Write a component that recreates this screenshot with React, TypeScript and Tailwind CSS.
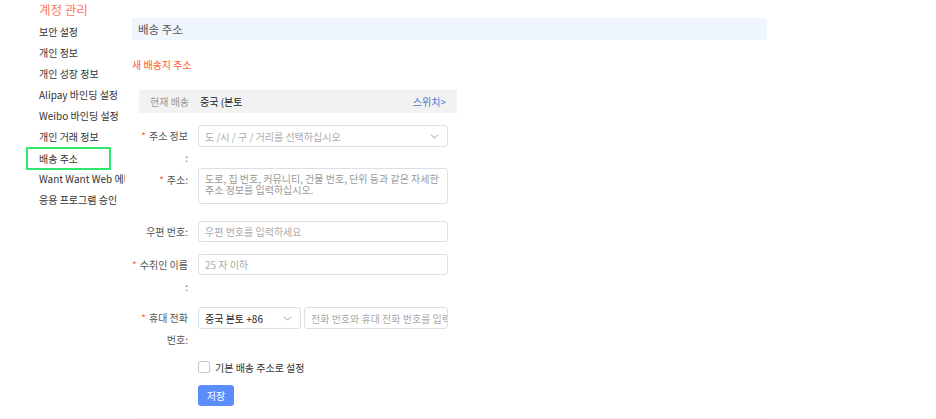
import { ChevronDown } from 'lucide-react';

const MENU = [
  '보안 설정',
  '개인 정보',
  '개인 성장 정보',
  'Alipay 바인딩 설정',
  'Weibo 바인딩 설정',
  '개인 거래 정보',
  '배송 주소',
  'Want Want Web 에디터',
  '응용 프로그램 승인',
];

const font = { fontFamily: '"Noto Sans CJK KR", "Noto Sans", "Liberation Sans", sans-serif' };

function Req() {
  return <span className="text-[#ff5a3c] mr-[3px]">*</span>;
}

export default function App() {
  return (
    <div className="flex items-start bg-white text-[#333] h-[419px] overflow-hidden" style={font}>
      {/* Sidebar */}
      <aside className="w-[125px] shrink-0 pl-[26px] overflow-hidden whitespace-nowrap mr-[7px]">
        <div className="pl-[13px] h-[21px] leading-[20px] text-[12.5px] text-[#ff7a5c]">계정 관리</div>
        {MENU.map((item) => (
          <div
            key={item}
            className={
              item === '배송 주소'
                ? 'w-[85px] h-[23px] -mb-[2px] border-2 border-[#2ee86f] pl-[11px] leading-[19px] text-[10px] text-[#333]'
                : 'h-[21px] pl-[13px] leading-[21px] text-[10px] text-[#333]'
            }
          >
            {item}
          </div>
        ))}
      </aside>

      {/* Main */}
      <main className="w-[635px] shrink-0">
        <div className="mt-[18px] h-[22px] bg-[#f0f6fd] px-[6px] leading-[22px] text-[11.5px] text-[#555]">배송 주소</div>

        <div className="mt-[17px] h-[16px] leading-[16px] text-[10px] text-[#ff5a36]">새 배송지 주소</div>

        <div className="mt-[17px] ml-[7px] w-[318px] h-[23px] bg-[#f2f2f2] flex items-center px-[11px] text-[10px]">
          <span className="text-[#999] w-[50px]">현재 배송</span>
          <span className="text-[#222]">중국 (본토</span>
          <span className="ml-auto text-[#3b7ddd]">스위치&gt;</span>
        </div>

        {/* Form */}
        <div className="mt-[12px] flex flex-col text-[10px]">
          <div className="flex items-start">
            <div className="w-[56px] text-right leading-[22px] text-[#555]">
              <div className="whitespace-nowrap"><Req />주소 정보</div>
              <div>:</div>
            </div>
            <div className="ml-[10px] w-[250px] h-[22px] border border-[#dcdfe6] rounded-[3px] flex items-center px-[6px] text-[#aaa]">
              <span>도 /시 / 구 / 거리를 선택하십시오</span>
              <ChevronDown size={13} strokeWidth={1.5} className="ml-auto text-[#888]" />
            </div>
          </div>

          <div className="flex items-start -mt-[1px]">
            <div className="w-[56px] text-right leading-[22px] pt-[1px] text-[#555]">
              <Req />주소:
            </div>
            <div className="ml-[10px] w-[250px] h-[36px] border border-[#dcdfe6] rounded-[3px] px-[6px] pt-[4px] leading-[11px] text-[#999]">
              도로, 집 번호, 커뮤니티, 건물 번호, 단위 등과 같은 자세한 주소 정보를 입력하십시오.
            </div>
          </div>

          <div className="flex items-start mt-[17px]">
            <div className="w-[56px] text-right leading-[22px] text-[#555] whitespace-nowrap">우편 번호:</div>
            <div className="ml-[10px] w-[250px] h-[21px] border border-[#dcdfe6] rounded-[3px] flex items-center px-[6px] text-[#aaa]">
              우편 번호를 입력하세요
            </div>
          </div>

          <div className="flex items-start mt-[11px]">
            <div className="w-[56px] text-right leading-[22px] text-[#555]">
              <div className="whitespace-nowrap -ml-[4px]"><Req />수취인 이름</div>
              <div>:</div>
            </div>
            <div className="ml-[10px] w-[250px] h-[21px] border border-[#dcdfe6] rounded-[3px] flex items-center px-[6px] text-[#aaa]">
              25 자 이하
            </div>
          </div>

          <div className="flex items-start mt-[9px]">
            <div className="w-[56px] text-right leading-[22px] text-[#555]">
              <div className="whitespace-nowrap"><Req />휴대 전화</div>
              <div>번호:</div>
            </div>
            <div className="ml-[10px] w-[250px] flex gap-[3px]">
              <div className="w-[103px] h-[22px] border border-[#dcdfe6] rounded-[3px] flex items-center px-[6px] text-[#222]">
                <span>중국 본토 +86</span>
                <ChevronDown size={13} strokeWidth={1.5} className="ml-auto text-[#888]" />
              </div>
              <div className="flex-1 h-[22px] border border-[#dcdfe6] rounded-[3px] flex items-center px-[6px] text-[#aaa] overflow-hidden whitespace-nowrap">
                전화 번호와 휴대 전화 번호를 입력
              </div>
            </div>
          </div>

          <div className="flex items-center h-[12px] ml-[66px] mt-[10px]">
            <span className="w-[12px] h-[12px] border border-[#c8c8c8] rounded-[2px] bg-white" />
            <span className="ml-[5px] text-[#333]">기본 배송 주소로 설정</span>
          </div>

          <div className="ml-[66px] mt-[12px] h-[21px]">
            <button className="w-[36px] h-[21px] rounded-[3px] bg-[#5b8dff] text-white text-[10px] leading-[21px]">저장</button>
          </div>
        </div>

        <div className="mt-[12px] h-[1px] bg-[#eef4fb]" />
      </main>
    </div>
  );
}
